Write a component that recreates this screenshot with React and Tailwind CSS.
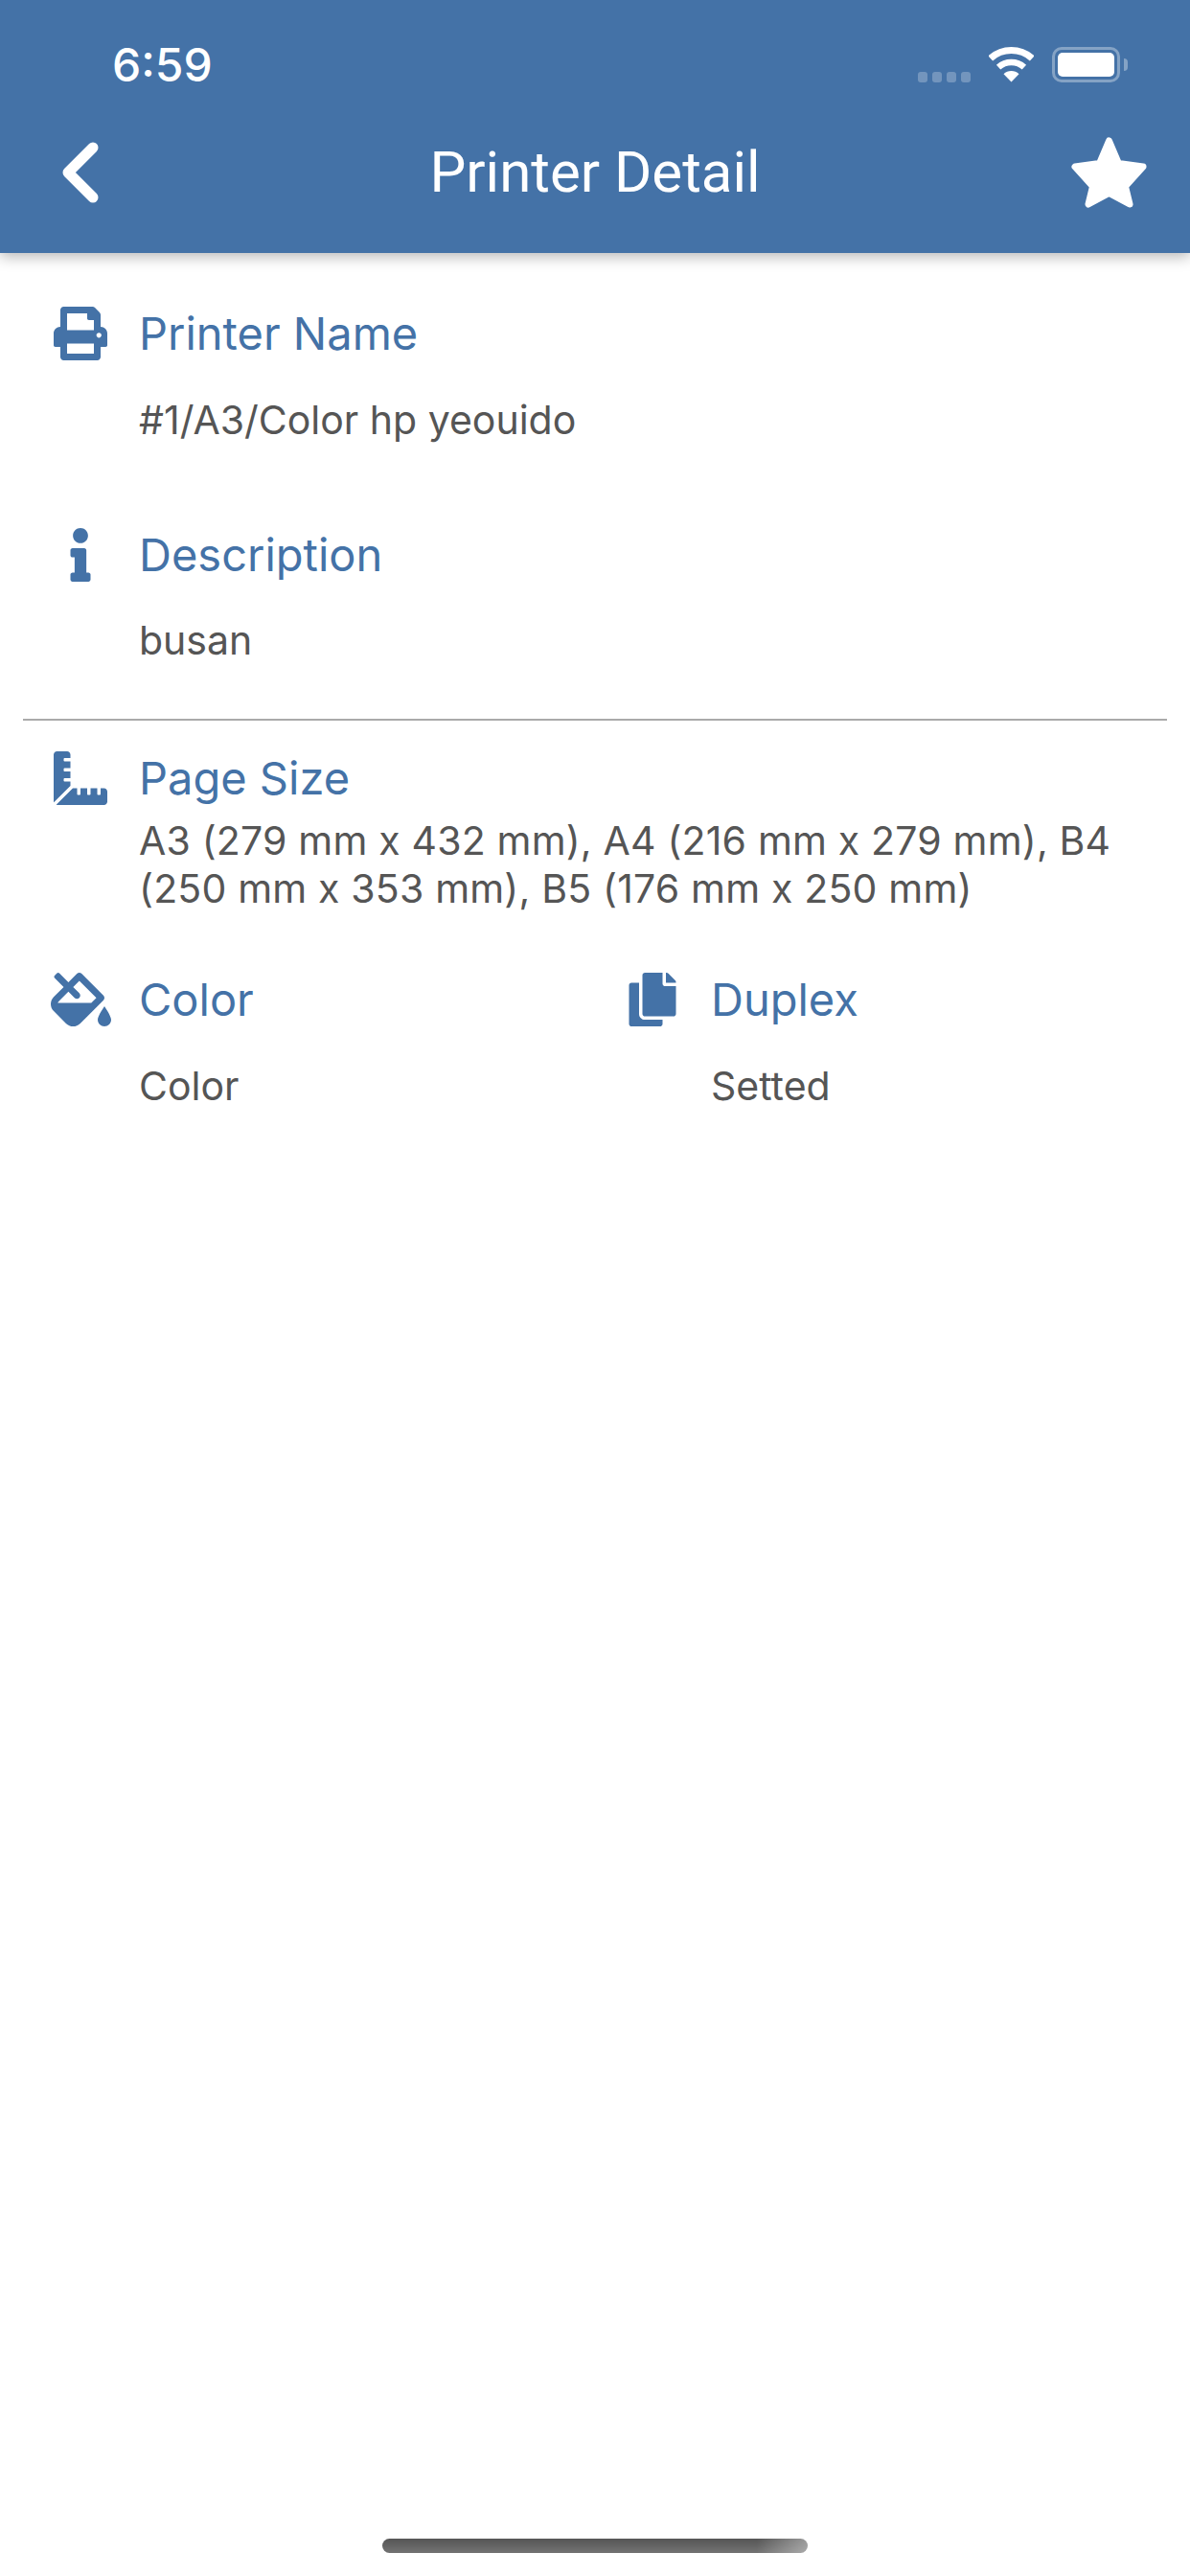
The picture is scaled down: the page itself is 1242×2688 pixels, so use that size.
import React from "react";
import { FaCopy, FaFillDrip, FaInfo, FaPrint, FaRulerCombined } from "react-icons/fa";

function StatusIcons() {
  return (
    <div className="flex items-start pt-[49px]">
      <div className="flex gap-[5px] mt-[26px]">
        <div className="w-[10px] h-[11px] rounded-[3px] bg-white/25"></div>
        <div className="w-[10px] h-[11px] rounded-[3px] bg-white/25"></div>
        <div className="w-[10px] h-[11px] rounded-[3px] bg-white/25"></div>
        <div className="w-[10px] h-[11px] rounded-[3px] bg-white/25"></div>
      </div>
      <svg className="ml-[19px]" width="47" height="37" viewBox="0 0 47 37" fill="none">
        <path d="M1.8 11.9 A32.5 32.5 0 0 1 45.2 11.9" stroke="#fff" strokeWidth="7" />
        <path d="M10.1 21.1 A20 20 0 0 1 36.9 21.1" stroke="#fff" strokeWidth="6.5" />
        <path d="M23.5 36.5 L15.5 28.3 A11.5 11.5 0 0 1 31.5 28.3 Z" fill="#fff" />
      </svg>
      <div className="ml-[19px] w-[71px] h-[37px] rounded-[10px] border-[3px] border-white/35 p-[3px]">
        <div className="w-full h-full rounded-[5px] bg-white"></div>
      </div>
      <div className="ml-[4px] mt-[12px] w-[4px] h-[13px] rounded-r-[4px] bg-white/35"></div>
    </div>
  );
}

function Back() {
  return (
    <svg className="ml-[19px]" width="39" height="64" viewBox="0 0 39 64" fill="none">
      <path d="M33 6 L7 32 L33 58" stroke="#fff" strokeWidth="11" strokeLinejoin="round" strokeLinecap="round" />
    </svg>
  );
}

function Star() {
  return (
    <svg width="79" height="74" viewBox="0 0 79 74">
      <path
        d="M39.5 4 L49.5 27.5 L75 31 L56.5 51.5 L61 70 L39.5 58.5 L18 70 L22.5 51.5 L4 31 L29.5 27.5 Z"
        fill="#fff"
        stroke="#fff"
        strokeWidth="7"
        strokeLinejoin="round"
      />
    </svg>
  );
}

function InfoBlock({ icon, label, children, bodyClass }) {
  return (
    <div>
      <div className="flex items-center h-[56px]">
        <div className="w-[64px] flex justify-center text-[#4472a7]">{icon}</div>
        <div className="ml-[29px] text-[47px] leading-[56px] text-[#4472a7]">{label}</div>
      </div>
      <div className={`ml-[93px] text-[41px] leading-[50px] text-[#555555] ${bodyClass}`}>{children}</div>
    </div>
  );
}

export default function App() {
  return (
    <div className="h-[2688px] bg-white flex flex-col font-['Inter','Liberation_Sans',sans-serif]">
      <header className="relative h-[264px] bg-[#4472a7] shadow-[0_4px_14px_rgba(0,0,0,0.28)] text-white">
        <div className="flex justify-between h-[104px] pl-[117px] pr-[65px]">
          <span className="text-[48px] leading-[136px] font-medium">6:59</span>
          <StatusIcons />
        </div>
        <div className="grid grid-cols-[1fr_auto_1fr] items-center h-[152px] px-[45px]">
          <Back />
          <h1 className="text-[60px] font-normal font-['Roboto',sans-serif]">Printer Detail</h1>
          <div className="justify-self-end">
            <Star />
          </div>
        </div>
      </header>

      <main className="pt-[56px] pl-[52px]">
        <InfoBlock icon={<FaPrint size={56} />} label="Printer Name" bodyClass="mt-[37px]">
          #1/A3/Color hp yeouido
        </InfoBlock>
        <div className="mt-[88px]">
          <InfoBlock icon={<FaInfo size={56} />} label="Description" bodyClass="mt-[36px]">
            busan
          </InfoBlock>
        </div>
      </main>

      <div className="mt-[57px] mx-[24px] h-[2px] bg-[#aaaaaa]"></div>

      <section className="pt-[32px] pl-[52px] pr-[60px]">
        <InfoBlock icon={<FaRulerCombined size={56} />} label="Page Size" bodyClass="mt-[12px] tracking-[0.18px]">
          A3 (279 mm x 432 mm), A4 (216 mm x 279 mm), B4 (250 mm x 353 mm), B5 (176 mm x 250 mm)
        </InfoBlock>
        <div className="grid grid-cols-[597px_1fr] mt-[63px]">
          <InfoBlock icon={<FaFillDrip className="w-[63px] h-[56px]" />} label="Color" bodyClass="mt-[37px]">
            Color
          </InfoBlock>
          <InfoBlock icon={<FaCopy size={56} />} label="Duplex" bodyClass="mt-[37px]">
            Setted
          </InfoBlock>
        </div>
      </section>

      <div className="mt-auto mb-[24px] self-center w-[444px] h-[15px] rounded-full bg-[linear-gradient(to_right,transparent_88%,rgba(255,255,255,0.4)_100%),linear-gradient(to_bottom,#555555,#737373)]"></div>
    </div>
  );
}
